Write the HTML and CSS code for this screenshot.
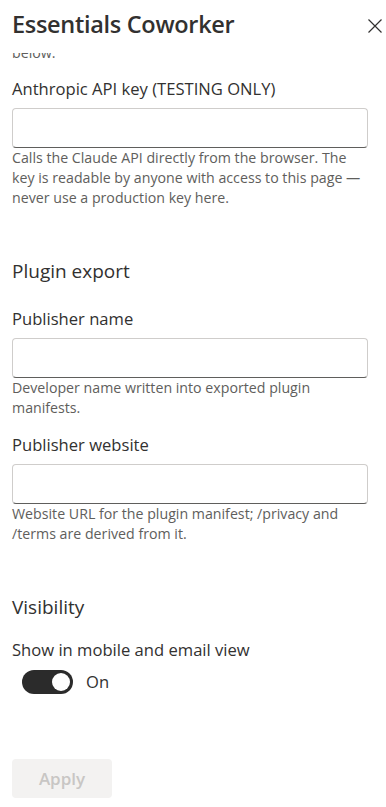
FILE: index.html
```html
<!DOCTYPE html>
<html lang="en">
<head>
<meta charset="utf-8">
<title>Essentials Coworker</title>
<link rel="stylesheet" href="styles.css">
</head>
<body>
<div class="panel">
  <header class="panel-header">
    <h1 class="panel-title">Essentials Coworker</h1>
    <button class="close-btn" aria-label="Close">
      <svg width="14" height="14" viewBox="0 0 14 14" aria-hidden="true"><path d="M0.5 0.5 L13.5 13.5 M13.5 0.5 L0.5 13.5" stroke="#323130" stroke-width="1.2" fill="none"/></svg>
    </button>
  </header>
  <div class="panel-body">
    <p class="desc clipped">below.</p>

    <div class="field first-field">
      <label class="field-label">Anthropic API key (TESTING ONLY)</label>
      <input class="text-input" type="text">
      <p class="desc">Calls the Claude API directly from the browser. The key is readable by anyone with access to this page — never use a production key here.</p>
    </div>

    <h2 class="section-title">Plugin export</h2>

    <div class="field field-after-title">
      <label class="field-label">Publisher name</label>
      <input class="text-input" type="text">
      <p class="desc">Developer name written into exported plugin manifests.</p>
    </div>

    <div class="field field-next">
      <label class="field-label">Publisher website</label>
      <input class="text-input" type="text">
      <p class="desc">Website URL for the plugin manifest; /privacy and /terms are derived from it.</p>
    </div>

    <h2 class="section-title">Visibility</h2>

    <div class="field field-toggle">
      <label class="field-label">Show in mobile and email view</label>
      <div class="toggle-row">
        <span class="toggle on"><span class="knob"></span></span>
        <span class="toggle-text">On</span>
      </div>
    </div>

    <div class="actions">
      <button class="apply-btn" disabled>Apply</button>
    </div>
  </div>
</div>
</body>
</html>
```
FILE: styles.css
```css
* { box-sizing: border-box; }
html, body { margin: 0; padding: 0; background: #ffffff; }
body {
  font-family: "Segoe UI", "Open Sans", "Noto Sans", sans-serif;
  color: #323130;
  width: 386px;
  height: 807px;
  overflow: hidden;
}
.panel { display: flex; flex-direction: column; height: 807px; }
.panel-header {
  height: 53px;
  flex: 0 0 53px;
  display: flex;
  align-items: flex-start;
  justify-content: space-between;
  padding: 0 4px 0 12px;
  background: #fff;
  position: relative;
  z-index: 1;
}
.panel-title {
  margin: 8px 0 0 0;
  font-size: 23.5px;
  font-weight: 600;
  line-height: 32px;
  letter-spacing: -0.3px;
  color: #323130;
}
.close-btn {
  border: 0;
  background: transparent;
  padding: 0;
  margin: 19px 0 0 0;
  width: 14px;
  height: 14px;
  display: flex;
}
.panel-body {
  flex: 1;
  overflow: hidden;
  padding: 0 18px 0 12px;
}
.desc {
  margin: 0;
  font-size: 14.2px;
  line-height: 20px;
  color: #605e5c;
}
.clipped { margin-top: -10px; }
.field { display: flex; flex-direction: column; }
.first-field { margin-top: 15px; }
.field-after-title { margin-top: 25px; }
.field-next { margin-top: 16px; }
.field-toggle { margin-top: 20px; }
.field-label {
  font-size: 16.6px;
  line-height: 22px;
  color: #323130;
}
.text-input {
  margin-top: 8px;
  height: 40px;
  width: 100%;
  border: 1px solid #cfcdcb;
  border-bottom: 1px solid #5f5e5c;
  border-radius: 4px;
  background: #fff;
  font: inherit;
  outline: none;
}
.section-title {
  margin: 51px 0 0 0;
  font-size: 19px;
  font-weight: 400;
  line-height: 24px;
  color: #323130;
}
.toggle-row {
  margin-top: 9px;
  padding-left: 10px;
  display: flex;
  align-items: center;
  gap: 13px;
  height: 24px;
}
.toggle {
  width: 51px;
  height: 24px;
  border-radius: 12px;
  background: #2b2b2b;
  display: flex;
  align-items: center;
  justify-content: flex-end;
  padding-right: 3px;
}
.knob {
  width: 18px;
  height: 18px;
  border-radius: 50%;
  background: #fff;
}
.toggle-text { font-size: 16.6px; line-height: 22px; color: #323130; }
.actions { margin-top: 65px; display: flex; }
.apply-btn {
  width: 100px;
  height: 39px;
  border: 0;
  border-radius: 4px;
  background: #f3f2f1;
  color: #c8c6c4;
  font-family: inherit;
  font-size: 17px;
  font-weight: 600;
}
```
